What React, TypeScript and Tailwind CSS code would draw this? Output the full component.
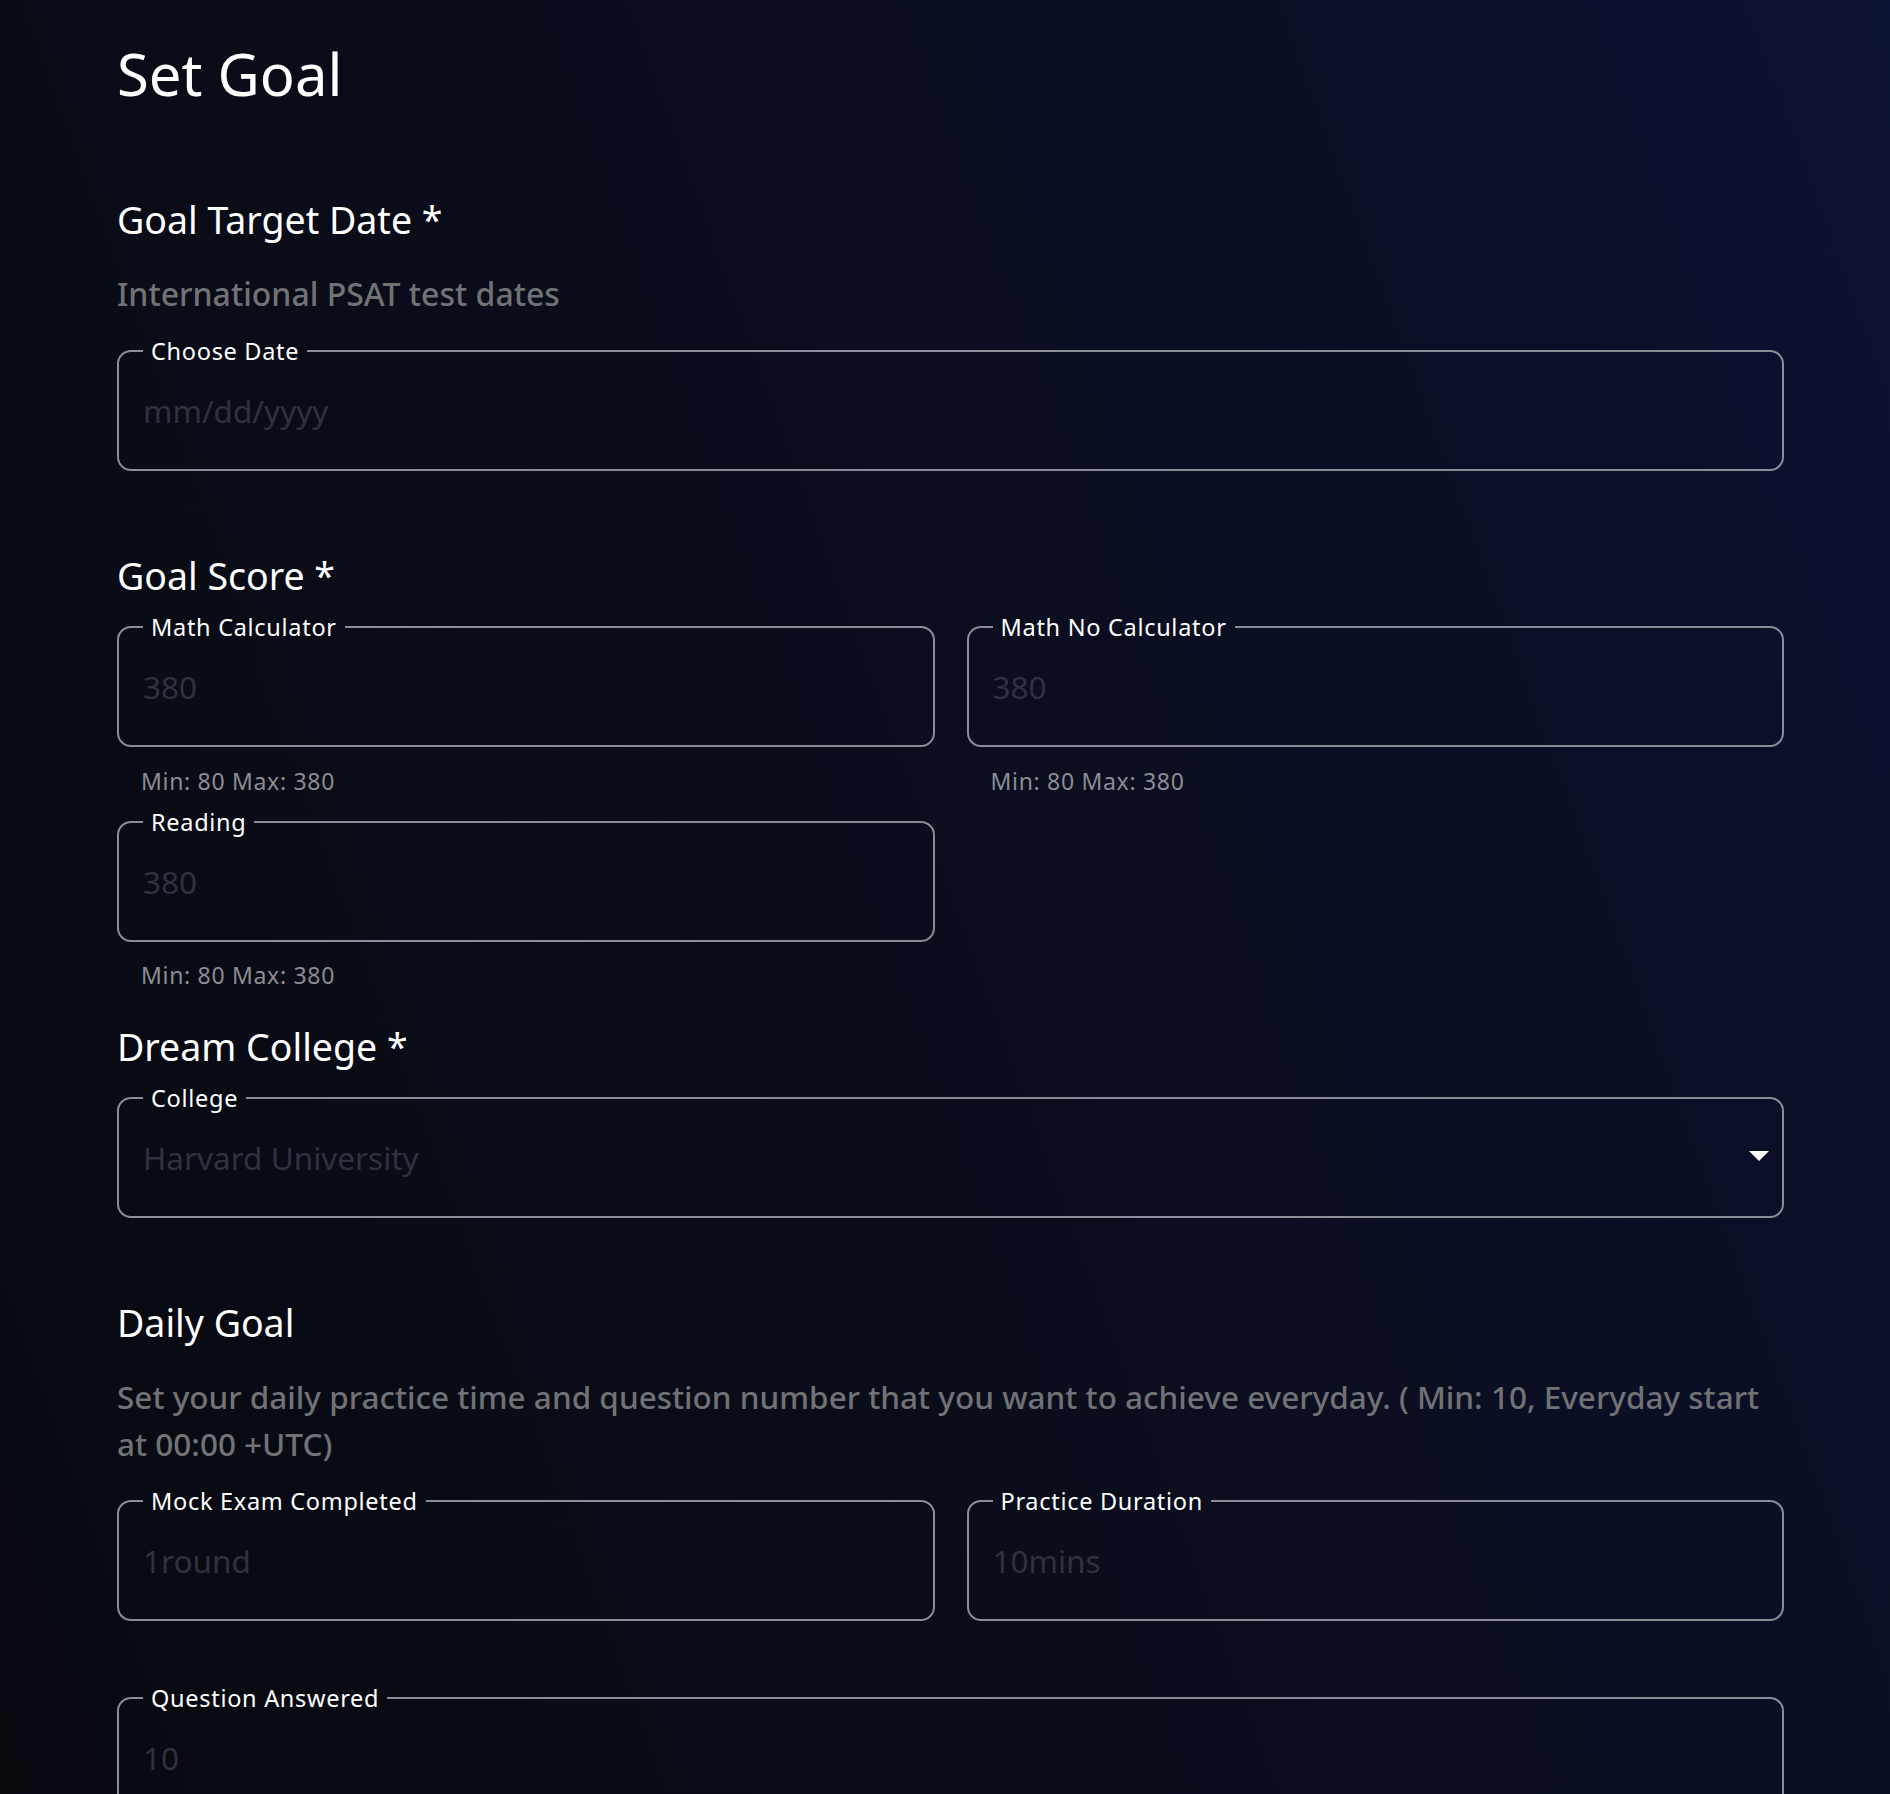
import React from "react";

type FieldProps = {
  label: string;
  placeholder: string;
  select?: boolean;
};

function Field({ label, placeholder, select }: FieldProps) {
  return (
    <fieldset className="m-0 min-w-0 rounded-[14px] border-2 border-[#8a8d98] p-0">
      <legend className="ml-[24px] px-[8px] text-[23.5px] leading-[30px] tracking-[0.03em] text-white">
        {label}
      </legend>
      <div className="flex h-[103px] items-center justify-between pb-[14px] pl-[24px] pr-[13px]">
        <span className="text-[31.5px] text-[#2e323e]">{placeholder}</span>
        {select && (
          <svg width="20" height="10" viewBox="0 0 20 10" className="mb-[4px]">
            <path d="M0 0 L20 0 L10 10 Z" fill="#ffffff" />
          </svg>
        )}
      </div>
    </fieldset>
  );
}

function Helper({ children }: { children: React.ReactNode }) {
  return (
    <p className="pl-[24px] text-[23px] leading-[30px] tracking-[0.03em] text-[#8b8d94]">
      {children}
    </p>
  );
}

function Heading({ children }: { children: React.ReactNode }) {
  return (
    <h2 className="text-[37.5px] leading-[40px] text-white">{children}</h2>
  );
}

export default function App() {
  return (
    <div className="min-h-screen w-full bg-[#090b14] bg-[linear-gradient(70deg,#08090f_0%,#0a0d1a_45%,#0b1130_100%)] font-['Noto_Sans',sans-serif]">
      <div className="flex flex-col pb-[60px] pl-[117px] pr-[106px] pt-[44px]">
        <h1 className="text-[58px] leading-[60px] text-white">Set Goal</h1>

        <div className="mt-[96px]">
          <Heading>Goal Target Date *</Heading>
        </div>
        <p className="mt-[34px] text-[32px] font-medium leading-[40px] text-[#717276]">
          International PSAT test dates
        </p>
        <div className="mt-[22px]">
          <Field label="Choose Date" placeholder="mm/dd/yyyy" />
        </div>

        <div className="mt-[85px]">
          <Heading>Goal Score *</Heading>
        </div>
        <div className="mt-[16px] grid grid-cols-2 gap-x-[32px]">
          <div>
            <Field label="Math Calculator" placeholder="380" />
            <div className="mt-[19px]">
              <Helper>Min: 80 Max: 380</Helper>
            </div>
          </div>
          <div>
            <Field label="Math No Calculator" placeholder="380" />
            <div className="mt-[19px]">
              <Helper>Min: 80 Max: 380</Helper>
            </div>
          </div>
          <div className="mt-[11px]">
            <Field label="Reading" placeholder="380" />
            <div className="mt-[18px]">
              <Helper>Min: 80 Max: 380</Helper>
            </div>
          </div>
        </div>

        <div className="mt-[37px]">
          <Heading>Dream College *</Heading>
        </div>
        <div className="mt-[16px]">
          <Field label="College" placeholder="Harvard University" select />
        </div>

        <div className="mt-[85px]">
          <Heading>Daily Goal</Heading>
        </div>
        <p className="mt-[30px] text-[31.5px] font-medium leading-[47px] text-[#717276]">
          Set your daily practice time and question number that you want to
          achieve everyday. ( Min: 10, Everyday start at 00:00 +UTC)
        </p>
        <div className="mt-[19px] grid grid-cols-2 gap-x-[32px]">
          <Field label="Mock Exam Completed" placeholder="1round" />
          <Field label="Practice Duration" placeholder="10mins" />
        </div>
        <div className="mt-[62px]">
          <Field label="Question Answered" placeholder="10" />
        </div>
      </div>
    </div>
  );
}
